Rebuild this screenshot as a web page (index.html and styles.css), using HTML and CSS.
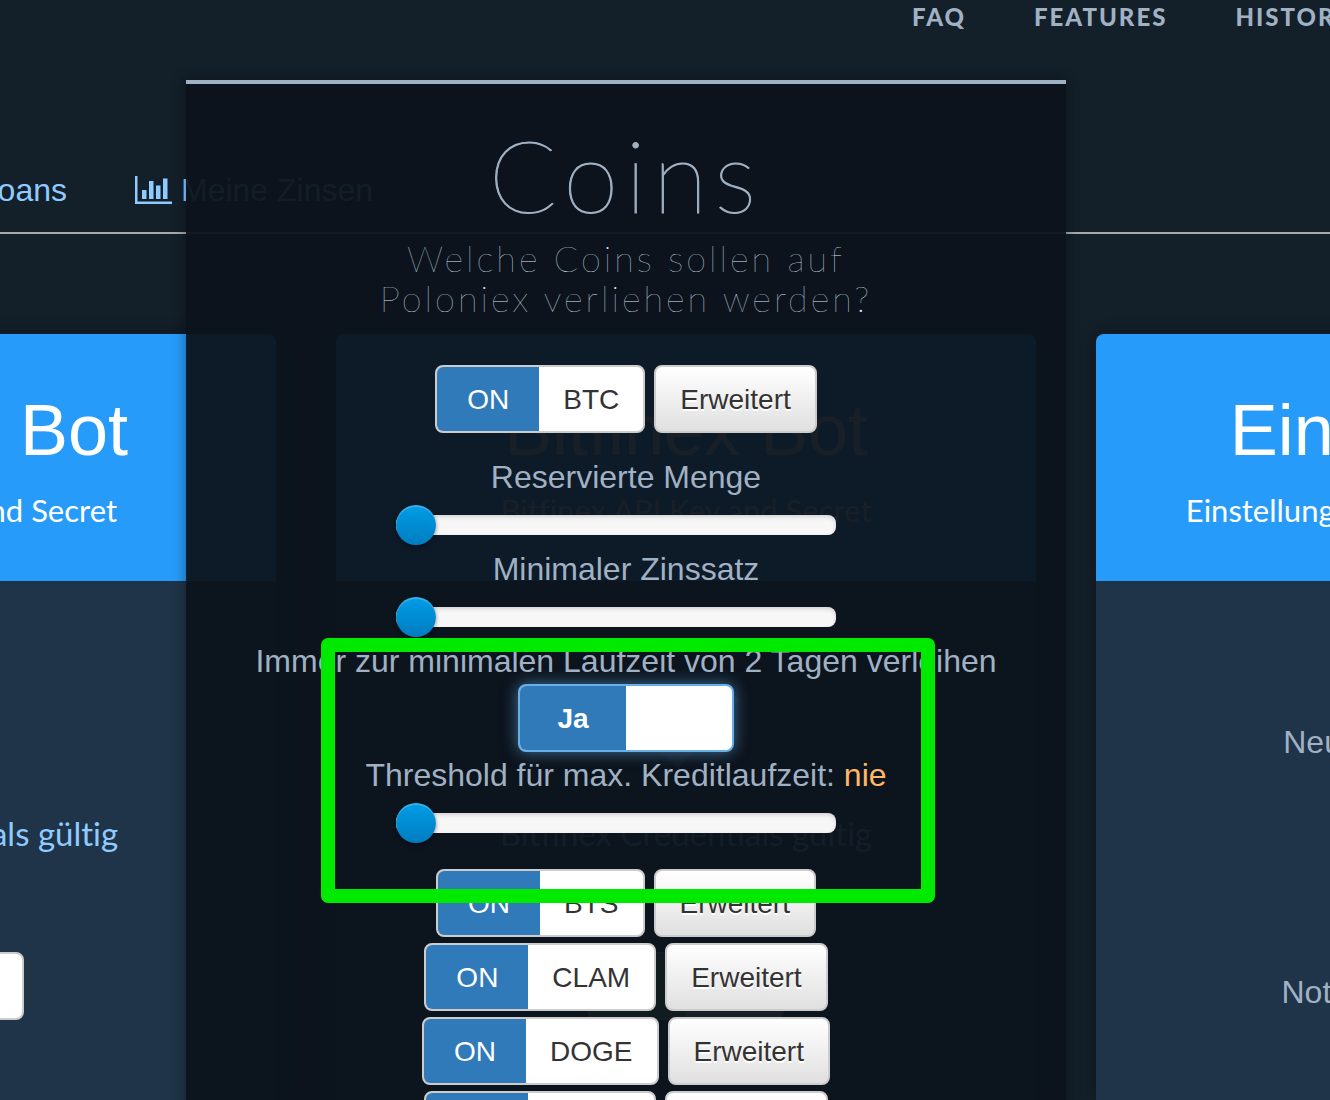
FILE: index.html
```html
<!DOCTYPE html>
<html lang="de">
<head>
<meta charset="utf-8">
<title>Coins</title>
<link rel="stylesheet" href="styles.css">
</head>
<body>
<div class="page">
  <nav class="topnav">
    <a href="#faq">FAQ</a>
    <a href="#features">FEATURES</a>
    <a href="#history">HISTORY</a>
  </nav>
  <nav class="tabs">
    <a class="tab tab-first" href="#loans">Aktive Loans</a>
    <a class="tab" href="#zinsen">
      <svg class="chart" viewBox="0 0 37 28" aria-hidden="true"><path d="M0 0h2.500v25.500H37V28H0zM7 14h4.500v9H7zM14 5h4.500v18H14zM21 9.500h4.500V23H21zM28 2.500h4.500V23H28z"/></svg>
      Meine Zinsen
    </a>
  </nav>
  <main class="cards">
    <section class="card">
      <header class="card-head"><h2>Poloniex Bot</h2><p>Poloniex API Key and Secret</p></header>
      <div class="card-body">
        <svg class="check" viewBox="0 0 108 84" aria-hidden="true"><path d="M46 84 0 40l16-16 30 28L92 0l16 16z"/></svg>
        <a class="valid" href="#poloniex">Poloniex Credentials gültig</a>
        <label class="switch"><input type="checkbox" checked><span class="on green"></span><span class="off half"></span></label>
      </div>
    </section>
    <section class="card">
      <header class="card-head"><h2>Bitfinex Bot</h2><p>Bitfinex API Key and Secret</p></header>
      <div class="card-body">
        <svg class="check" viewBox="0 0 108 84" aria-hidden="true"><path d="M46 84 0 40l16-16 30 28L92 0l16 16z"/></svg>
        <a class="valid" href="#bitfinex">Bitfinex Credentials gültig</a>
        <label class="switch"><input type="checkbox" checked><span class="on green"></span><span class="off half"></span></label>
      </div>
    </section>
    <section class="card">
      <header class="card-head"><h2>Einstellungen</h2><p>Einstellungen und Benachrichtigungen</p></header>
      <div class="card-body settings">
        <p>Neue Kredite via Email</p>
        <p>Notifications per E-Mail</p>
      </div>
    </section>
  </main>

  <div class="overlay">
    <div class="modal" role="dialog" aria-labelledby="title">
      <h1 id="title">Coins</h1>
      <p class="lead">Welche Coins sollen auf<br>Poloniex verliehen werden?</p>
      <div class="coin">
        <label class="switch"><input type="checkbox" checked><span class="on">ON</span><span class="off">BTC</span></label>
        <button class="btn" type="button">Erweitert</button>
      </div>
      <div class="details">
        <label class="caption" for="reserve">Reservierte Menge</label>
        <input class="slider" id="reserve" type="range" min="0" max="100" value="0">
        <label class="caption" for="rate">Minimaler Zinssatz</label>
        <input class="slider" id="rate" type="range" min="0" max="100" value="0">
        <label class="caption" for="short">Immer zur minimalen Laufzeit von 2 Tagen verleihen</label>
        <label class="switch focus"><input id="short" type="checkbox" checked><span class="on yes">Ja</span><span class="off no"></span></label>
        <label class="caption" for="threshold">Threshold für max. Kreditlaufzeit: <output for="threshold">nie</output></label>
        <input class="slider" id="threshold" type="range" min="0" max="100" value="0">
      </div>
      <div class="coin">
        <label class="switch"><input type="checkbox" checked><span class="on">ON</span><span class="off">BTS</span></label>
        <button class="btn" type="button">Erweitert</button>
      </div>
      <div class="coin">
        <label class="switch"><input type="checkbox" checked><span class="on">ON</span><span class="off">CLAM</span></label>
        <button class="btn" type="button">Erweitert</button>
      </div>
      <div class="coin">
        <label class="switch"><input type="checkbox" checked><span class="on">ON</span><span class="off">DOGE</span></label>
        <button class="btn" type="button">Erweitert</button>
      </div>
      <div class="coin">
        <label class="switch"><input type="checkbox" checked><span class="on">ON</span><span class="off">DASH</span></label>
        <button class="btn" type="button">Erweitert</button>
      </div>
      <div class="highlight"></div>
    </div>
  </div>
</div>
</body>
</html>
```
FILE: styles.css
```css
* { box-sizing: border-box; }
body {
  margin: 0;
  background: #131f29;
  color: #a0b1c4;
  font: 32px/46px "Liberation Sans", Arial, sans-serif;
}
h1, h2, p { margin: 0; font-weight: 400; }
a { color: #8fcbff; text-decoration: none; }
.page {
  position: relative;
  display: flex;
  flex-direction: column;
  height: 100vh;
  overflow: hidden;
}

/* navigation */
.topnav {
  display: flex;
  gap: 68px;
  height: 34px;
  padding-left: 912px;
  font: 900 24px/34px Lato, sans-serif;
  letter-spacing: 2px;
  white-space: nowrap;
}
.topnav a { color: #a0b1c4; }
.tabs {
  display: flex;
  gap: 68px;
  height: 200px;
  padding-top: 133px;
  border-bottom: 2px solid #a9a9a9;
  white-space: nowrap;
}
.tab { display: flex; align-items: center; gap: 9px; height: 46px; }
.tab-first { width: 67px; justify-content: flex-end; }
.chart { width: 37px; height: 28px; fill: #8fcbff; }

/* bot cards */
.cards {
  display: flex;
  flex: 1;
  justify-content: center;
  gap: 60px;
  margin-top: 100px;
  padding-left: 42px;
}
.card {
  display: flex;
  flex: none;
  flex-direction: column;
  width: 700px;
  border-radius: 8px 8px 0 0;
  background: #1f3448;
  box-shadow: 0 0 16px rgba(0, 0, 0, .3);
  text-align: center;
  font-variant-ligatures: none;
}
.card-head {
  height: 247px;
  padding-top: 48px;
  border-radius: 8px 8px 0 0;
  background: #279bf9;
  color: #fff;
}
.card-head h2 { font-size: 72px; line-height: 96px; }
.card-head p { font-family: Lato, sans-serif; font-size: 31px; line-height: 64px; }
.card-body {
  display: flex;
  flex-direction: column;
  align-items: center;
  padding-top: 103px;
}
.check { width: 108px; height: 84px; fill: #4a7fb5; }
.valid { margin: 42px 0 96px; font-family: Lato, sans-serif; font-size: 33px; }
.settings { gap: 204px; padding-top: 138px; }

/* coin dialog */
.overlay {
  position: absolute;
  inset: 0;
  padding: 80px 78px 0 0;
}
.modal {
  position: relative;
  display: flex;
  flex-direction: column;
  align-items: center;
  width: 880px;
  max-width: 100%;
  min-height: 1100px;
  margin: 0 auto;
  padding-top: 32px;
  border-top: 4px solid #a0b1c4;
  background: rgba(12, 19, 27, .95);
  box-shadow: 0 0 12px rgba(0, 0, 0, .4);
  text-align: center;
}
h1 {
  font: 100 100px/116px Lato, sans-serif;
  letter-spacing: 7px;
  -webkit-text-stroke: 1px #a0b1c4;
}
.lead {
  margin: 6px 0 47px;
  color: #dbe9f8;
  font: 100 36px/40px Lato, sans-serif;
  letter-spacing: 3px;
}
.coin { display: flex; gap: 9px; margin-bottom: 6px; }
.details {
  display: flex;
  flex-direction: column;
  align-items: center;
  margin: 15px 0 25px;
}
.caption { white-space: nowrap; }
.caption output { color: #ffb866; }

.switch {
  position: relative;
  display: flex;
  height: 68px;
  border: 2px solid #ccc;
  border-radius: 8px;
  background: #fff;
  overflow: hidden;
  color: #333;
  font-size: 28px;
  line-height: 66px;
}
.switch input { position: absolute; opacity: 0; }
.on { width: 102px; background: #307aba; color: #fff; }
.off { padding: 0 24px; }
.green { width: 96px; background: #5cb85c; }
.half { width: 96px; }
.yes { width: 106px; font-weight: 700; }
.no { width: 106px; }
.focus {
  border-color: #66afe9;
  box-shadow: 0 0 16px rgba(102, 175, 233, .6);
}
.btn {
  height: 68px;
  padding: 2px 24px 0;
  border: 2px solid #ccc;
  border-radius: 8px;
  background: linear-gradient(#fff, #e0e0e0);
  color: #333;
  font: 28px/62px "Liberation Sans", Arial, sans-serif;
  text-shadow: 0 2px 0 #fff;
}

.slider {
  width: 440px;
  height: 40px;
  margin: 5px 20px 1px 0;
  background: none;
  appearance: none;
}
.slider::-webkit-slider-runnable-track {
  height: 20px;
  border-radius: 8px;
  background: #f7f7f7;
  box-shadow: inset 0 2px 4px rgba(0, 0, 0, .15);
}
.slider::-webkit-slider-thumb {
  width: 40px;
  height: 40px;
  margin-top: -10px;
  border-radius: 50%;
  background: linear-gradient(#009de6, #007cc0);
  box-shadow: inset 0 2px 0 rgba(255, 255, 255, .2), 0 2px 4px rgba(0, 0, 0, .4);
  appearance: none;
}

/* marker drawn over the dialog */
.highlight {
  position: absolute;
  top: 554px;
  left: 135px;
  width: 614px;
  height: 265px;
  border: 14px solid #00ea00;
  border-radius: 7px;
  pointer-events: none;
}
```
